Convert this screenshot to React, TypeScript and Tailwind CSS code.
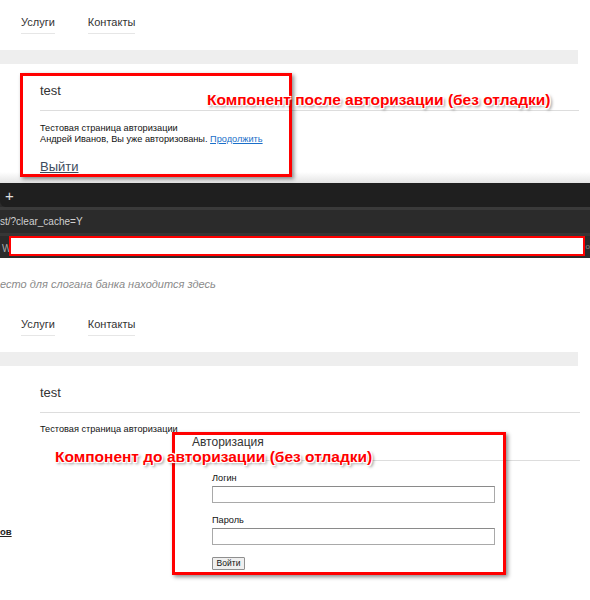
import React from 'react';

const font = "font-['Liberation_Sans',Arial,sans-serif]";

const Nav: React.FC = () => (
  <div className="flex gap-[33px] pl-[21px] text-[11px] leading-[13px] text-[#333]">
    <span className="pt-[16px] pb-[4px] border-b border-[#e6e6e6]">Услуги</span>
    <span className="pt-[16px] pb-[4px] border-b border-[#e6e6e6]">Контакты</span>
  </div>
);

const Label: React.FC<{ text: string; className: string }> = ({ text, className }) => (
  <div
    className={`absolute font-bold text-[15.5px] leading-[20px] text-[#ff0000] whitespace-nowrap [text-shadow:-1px_-1px_0_#fff,1px_-1px_0_#fff,-1px_1px_0_#fff,1px_1px_0_#fff,0_0_3px_#fff,2px_2px_3px_rgba(0,0,0,0.5)] ${className}`}
  >
    {text}
  </div>
);

const AfterAuth: React.FC = () => (
  <section className="relative h-[183px] bg-gradient-to-b from-white from-[94%] to-[#e4e4e4]">
    <Nav />
    <div className="mt-[16px] h-[14px] w-[578px] bg-[#eeeeee]" />
    <div className="pl-[40px]">
      <div className="mt-[19px] text-[13px] leading-[16px] text-[#333]">test</div>
      <div className="mt-[11px] w-[539px] border-t border-[#dddddd]" />
      <div className="mt-[12px] text-[9.2px] leading-[11px] text-[#111]">
        <p>Тестовая страница авторизации</p>
        <p>
          Андрей Иванов, Вы уже авторизованы.{' '}
          <a className="text-[#1a6fc9] underline">Продолжить</a>
        </p>
      </div>
      <a className="block mt-[14px] text-[13px] leading-[16px] text-[#3d4b5c] underline">Выйти</a>
    </div>

    <div className="absolute left-[20px] top-[73px] w-[272px] h-[104px] border-[3px] border-[#ff0000] shadow-[2px_2px_4px_rgba(0,0,0,0.45)]" />
    <Label text="Компонент после авторизации (без отладки)" className="left-[207px] top-[90px]" />
  </section>
);

const BrowserBar: React.FC = () => (
  <section className="h-[75px] bg-[#2b2b2b] text-[#d0d0d0]">
    <div className="h-[24px] bg-[#1f1f1f] rounded-bl-[6px] flex items-center pl-[5px] text-[15px] leading-none text-[#e0e0e0]">+</div>
    <div className="h-[3px] bg-[#3a3a3a]" />
    <div className="h-[23px] flex items-center text-[10px]">st/?clear_cache=Y</div>
    <div className="h-[3px] bg-[#363636]" />
    <div className="h-[22px] flex items-start text-[10px]">
      <span className="w-[9px] pl-[2px] pt-[5px] text-[#aaa]">W</span>
      <div className="w-[577px] h-[20px] bg-white border-[2px] border-[#ff0000]" />
      <span className="pl-[1px] pt-[5px] text-[8px] text-[#888]">o</span>
    </div>
  </section>
);

const BeforeAuth: React.FC = () => (
  <section className="relative h-[342px] bg-white">
    <div className="pt-[20px] text-[11px] leading-[13px] italic text-[#8a8a8a]">есто для слогана банка находится здесь</div>
    <div className="mt-[11px]">
      <Nav />
    </div>
    <div className="mt-[16px] h-[14px] w-[578px] bg-[#eeeeee]" />
    <div className="pl-[40px]">
      <div className="mt-[19px] text-[13px] leading-[16px] text-[#333]">test</div>
      <div className="mt-[11px] w-[540px] border-t border-[#dddddd]" />
      <p className="mt-[11px] text-[9.2px] leading-[11px] text-[#111]">Тестовая страница авторизации</p>
    </div>
    <div className="flex">
      <div className="w-[192px] pt-[83px]">
        <a className="inline-block text-[9.5px] leading-[12px] font-bold text-[#222] underline">ов</a>
      </div>
      <div className="flex-1">
        <div className="mt-0 text-[12px] leading-[14px] text-[#333]">Авторизация</div>
        <div className="mt-[11px] w-[388px] border-t border-[#dddddd]" />
        <div className="pl-[20px] pt-[12px] text-[9.2px] leading-[11px] text-[#111]">
          <label className="block">Логин</label>
          <div className="mt-[2px] w-[283px] h-[17px] border border-[#a9a9a9] border-t-[#8a8a8a] bg-white" />
          <label className="block mt-[12px]">Пароль</label>
          <div className="mt-[2px] w-[283px] h-[17px] border border-[#a9a9a9] border-t-[#8a8a8a] bg-white" />
          <button className="mt-[12px] w-[33px] h-[13px] border border-[#8f8f8f] rounded-[1px] bg-[#efefef] text-[8.5px] leading-[11px] text-[#111]">
            Войти
          </button>
        </div>
      </div>
    </div>

    <div className="absolute left-[172px] top-[174px] w-[334px] h-[143px] border-[3px] border-[#ff0000] shadow-[2px_2px_4px_rgba(0,0,0,0.45)]" />
    <Label text="Компонент до авторизации (без отладки)" className="left-[55px] top-[189px]" />
  </section>
);

const App: React.FC = () => {
  return (
    <div className={`${font} w-[590px] h-[600px] overflow-hidden bg-white`}>
      <AfterAuth />
      <BrowserBar />
      <BeforeAuth />
    </div>
  );
};

export default App;
